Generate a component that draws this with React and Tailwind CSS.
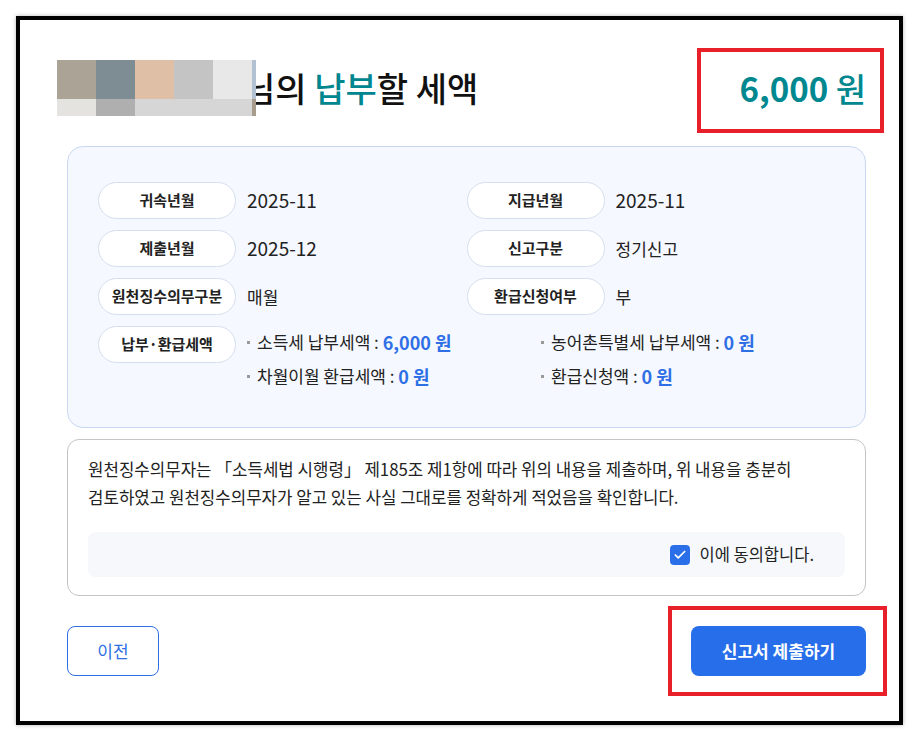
import { Check } from "lucide-react";

// 원천세 신고 - 납부할 세액 확인 화면
const summary = [
  { label: "귀속년월", value: "2025-11", num: true },
  { label: "지급년월", value: "2025-11", num: true },
  { label: "제출년월", value: "2025-12", num: true },
  { label: "신고구분", value: "정기신고" },
  { label: "원천징수의무구분", value: "매월" },
  { label: "환급신청여부", value: "부" },
];

const amounts = [
  { label: "소득세 납부세액", value: "6,000 원" },
  { label: "농어촌특별세 납부세액", value: "0 원" },
  { label: "차월이월 환급세액", value: "0 원" },
  { label: "환급신청액", value: "0 원" },
];

// 이름 가림 처리용 모자이크 칸 색상
const mosaicTop = ["#aba395", "#7e8d93", "#dfc0a7", "#c4c4c4", "#e8e8e8"];
const mosaicBottom = ["#e5e3df", "#afafaf", "#d6d6d6", "#d6d6d6", "#d6d6d6"];

function Pill({ children }) {
  return (
    <div className="flex h-[37px] w-[138px] shrink-0 items-center justify-center rounded-full border border-[#d6deee] bg-white text-[15px] font-bold text-[#222]">
      {children}
    </div>
  );
}

function Mosaic() {
  return (
    <div className="relative z-10 flex shrink-0">
      <div className="flex flex-col">
        <div className="flex">
          {mosaicTop.map((c, i) => (
            <div key={i} className="h-[39px] w-[39px]" style={{ background: c }} />
          ))}
        </div>
        <div className="flex">
          {mosaicBottom.map((c, i) => (
            <div key={i} className="h-[17px] w-[39px]" style={{ background: c }} />
          ))}
        </div>
      </div>
      <div className="flex flex-col">
        <div className="h-[39px] w-[4px] bg-[#b2c2d2]" />
        <div className="h-[17px] w-[4px] bg-[#a89c8c]" />
      </div>
    </div>
  );
}

function App() {
  return (
    <div className="h-[740px] w-[918px] bg-white p-[16px] font-['Noto_Sans_CJK_KR',sans-serif]">
      <div className="relative h-[709px] w-[887px] border-4 border-black pl-[47px] pr-[33px] pt-[40px] shadow-[0_0_4px_rgba(0,0,0,0.3)]">
        {/* 제목 + 납부할 세액 */}
        <div className="-ml-[10px] flex h-[56px] items-center justify-between">
          <div className="flex items-center">
            <Mosaic />
            <h1 className="-ml-[12px] text-[34px] font-medium leading-none text-[#111]">
              님의 <span className="text-[#00868f]">납부</span>할 세액
            </h1>
          </div>
          <div className="text-[33px] font-bold leading-none text-[#00878f]">
            6,000 <span className="font-medium">원</span>
          </div>
        </div>

        {/* 신고 요약 */}
        <div className="mt-[30px] rounded-[16px] border border-[#c9d8f2] bg-[#f5f8fe] px-[30px] pb-[39px] pt-[35px]">
          <div className="grid grid-cols-2 gap-y-[11px]">
            {summary.map((item) => (
              <div key={item.label} className="flex items-center">
                <Pill>{item.label}</Pill>
                <span className={item.num ? "ml-[11px] text-[19px] text-[#222]" : "ml-[11px] text-[17px] text-[#222]"}>
                  {item.value}
                </span>
              </div>
            ))}
          </div>
          <div className="mt-[11px] flex items-start">
            <Pill>납부·환급세액</Pill>
            <div className="ml-[11px] grid flex-1 grid-cols-2 gap-y-[10px] pt-[4px]">
              {amounts.map((item) => (
                <div key={item.label} className="flex items-center text-[17px] leading-[24px] text-[#222]">
                  <span className="mr-[7px] h-[3px] w-[3px] bg-[#999]" />
                  <span>{item.label} :&nbsp;</span>
                  <span className="text-[18px] font-bold text-[#2f6fe6]">{item.value}</span>
                </div>
              ))}
            </div>
          </div>
        </div>

        {/* 확인 동의 */}
        <div className="mt-[11px] rounded-[12px] border border-[#c4c4c4] px-[20px] pb-[18px] pt-[15px]">
          <p className="whitespace-nowrap text-[16.8px] leading-[28px] text-[#222]">
            원천징수의무자는 「소득세법 시행령」 제185조 제1항에 따라 위의 내용을 제출하며, 위 내용을 충분히
            <br />
            검토하였고 원천징수의무자가 알고 있는 사실 그대로를 정확하게 적었음을 확인합니다.
          </p>
          <div className="mt-[21px] flex h-[45px] items-center justify-end rounded-[8px] bg-[#f6f8fc] pr-[31px]">
            <label className="flex items-center">
              <span className="flex h-[20px] w-[20px] items-center justify-center rounded-[4px] bg-[#2a6ee8]">
                <Check size={14} strokeWidth={3} className="text-white" />
              </span>
              <span className="ml-[9px] text-[16.5px] text-[#222]">이에 동의합니다.</span>
            </label>
          </div>
        </div>

        {/* 하단 버튼 */}
        <div className="mt-[30px] flex items-center justify-between">
          <button className="h-[50px] w-[92px] rounded-[8px] border border-[#2f6fe4] bg-white text-[17px] text-[#2f6fe4]">
            이전
          </button>
          <button className="h-[50px] w-[175px] rounded-[8px] bg-[#266eea] text-[17px] font-bold text-white">
            신고서 제출하기
          </button>
        </div>

        {/* 강조 표시 */}
        <div className="pointer-events-none absolute left-[677px] top-[28px] h-[85px] w-[187px] border-4 border-[#e8202a]" />
        <div className="pointer-events-none absolute left-[648px] top-[586px] h-[90px] w-[219px] border-4 border-[#e8202a]" />
      </div>
    </div>
  );
}

export default App;
